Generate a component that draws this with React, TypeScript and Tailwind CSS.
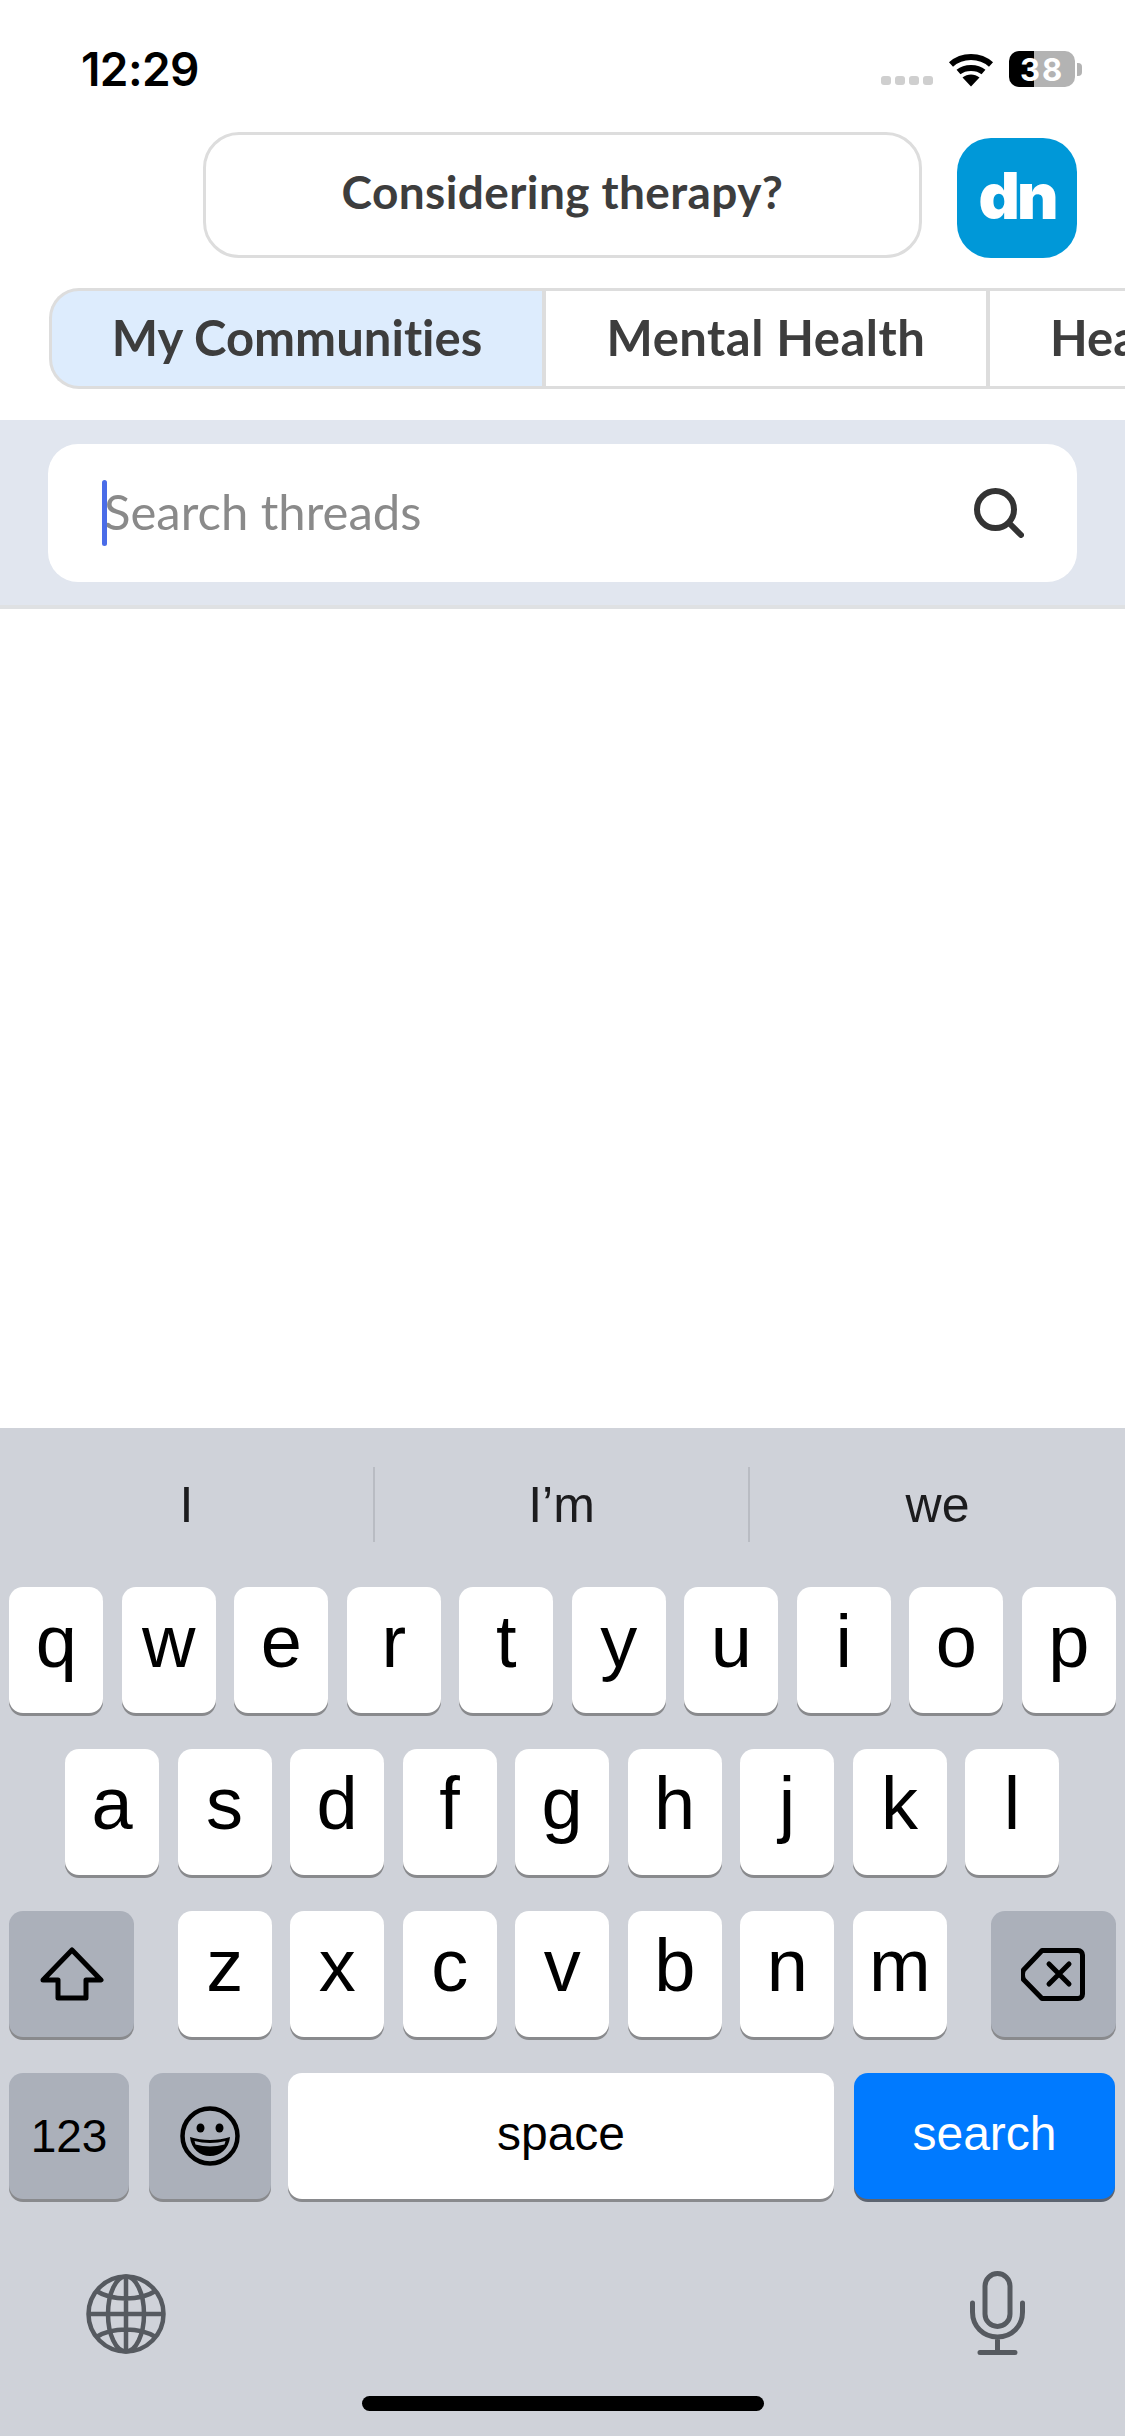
const FONT = "font-['Lato','Noto_Sans',sans-serif] [font-variant-ligatures:none]";

function Key({ label, className = "" }: { label: string; className?: string }) {
  return (
    <div className={`flex h-[126px] items-center justify-center rounded-[14px] bg-white pb-[16px] font-['Liberation_Sans',sans-serif] text-[74px] leading-none text-black shadow-[0_3px_0_#898a8d] ${className}`}>
      {label}
    </div>
  );
}

function GrayKey({ children, className = "" }: { children: React.ReactNode; className?: string }) {
  return (
    <div className={`flex h-[126px] items-center justify-center rounded-[14px] bg-[#abb0ba] shadow-[0_3px_0_#898a8d] ${className}`}>
      {children}
    </div>
  );
}

function Wifi() {
  return (
    <svg width="46" height="34" viewBox="0 0 46 34" className="mt-[1px]">
      <path d="M3 11.5C14 1.5 32 1.5 43 11.5" fill="none" stroke="#000" strokeWidth="6" />
      <path d="M10.5 19C17 13.5 29 13.5 35.5 19" fill="none" stroke="#000" strokeWidth="6" />
      <path d="M14.5 24.5C19.5 20.5 26.5 20.5 31.5 24.5L23 33.5Z" fill="#000" />
    </svg>
  );
}

function StatusBar() {
  return (
    <div className="flex h-[132px] shrink-0 items-start justify-between pl-[81px] pr-[43px] pt-[46px]">
      <div className="font-['Inter',sans-serif] text-[46px] font-semibold leading-[46px] tracking-[-0.6px] text-black">12:29</div>
      <div className="mt-[5px] flex items-end">
        <div className="mb-[2px] flex gap-[4px]">
          <div className="h-[9px] w-[10px] rounded-[3px] bg-[#cfcfcf]" />
          <div className="h-[9px] w-[10px] rounded-[3px] bg-[#cfcfcf]" />
          <div className="h-[9px] w-[10px] rounded-[3px] bg-[#cfcfcf]" />
          <div className="h-[9px] w-[10px] rounded-[3px] bg-[#cfcfcf]" />
        </div>
        <div className="ml-[15px]"><Wifi /></div>
        <div className="relative ml-[15px] flex h-[36px] w-[66px] overflow-hidden rounded-[10px]">
          <div className="w-[25px] bg-black" />
          <div className="flex-1 bg-[#b3b3b3]" />
          <div className="absolute inset-0 flex items-center justify-center font-['Inter',sans-serif] text-[31px] font-bold leading-none tracking-[2px] text-white">38</div>
        </div>
        <div className="mb-[11px] ml-[2px] h-[13px] w-[5px] rounded-r-[4px] bg-[#b3b3b3]" />
      </div>
    </div>
  );
}

function Header() {
  return (
    <div className="flex h-[126px] shrink-0 items-end justify-end pr-[48px]">
      <div className={`mr-[35px] flex h-[126px] w-[719px] items-center justify-center rounded-[36px] border-[3px] border-[#dddddd] bg-white pb-[6px] ${FONT} text-[46px] font-bold leading-none tracking-[0.4px] text-[#3d3d3d]`}>
        Considering therapy?
      </div>
      <div className="flex h-[120px] w-[120px] items-center justify-center rounded-[34px] bg-[#0098d8] pb-[4px] font-['Inter',sans-serif] text-[64px] font-black leading-none tracking-[-3px] text-white">
        dn
      </div>
    </div>
  );
}

function Tabs() {
  return (
    <div className={`mt-[30px] flex h-[101px] shrink-0 overflow-hidden pl-[49px] ${FONT} text-[49px] font-bold leading-none text-[#3d3d3d]`}>
      <div className="flex w-[493px] shrink-0 items-center justify-center rounded-l-[30px] border-[3px] border-r-0 border-[#dddddd] bg-[#ddecfd] pb-[2px]">My Communities</div>
      <div className="flex w-[444px] shrink-0 items-center justify-center border-[3px] border-l-[4px] border-r-0 border-[#dddddd] bg-white pb-[2px] tracking-[0.5px]">Mental Health</div>
      <div className="flex w-[400px] shrink-0 items-center justify-start border-[3px] border-l-[4px] border-r-0 border-[#dddddd] bg-white pb-[2px] pl-[60px]">Health</div>
    </div>
  );
}

function SearchBand() {
  return (
    <div className="mt-[31px] h-[189px] shrink-0 border-b-[4px] border-[#dfe1e3] bg-[#e1e6ef] px-[48px] pt-[24px]">
      <div className={`relative flex h-[138px] items-center justify-between rounded-[30px] bg-white pl-[56px] pr-[53px] ${FONT} text-[49px] leading-none text-[#8a8a8a]`}>
        <div className="absolute left-[54px] top-[36px] h-[66px] w-[5px] rounded-[3px] bg-[#4a6ce8]" />
        <span className="pb-[3px]">Search threads</span>
        <svg width="50" height="50" viewBox="0 0 50 50" fill="none" stroke="#333333" strokeWidth="6" strokeLinecap="round">
          <circle cx="21.5" cy="21.5" r="18.5" />
          <path d="M35 35L47 47" />
        </svg>
      </div>
    </div>
  );
}

function Suggestions() {
  return (
    <div className="flex h-[159px] items-start pt-[39px] font-['Liberation_Sans',sans-serif] text-[50px] leading-none text-[#1c1c1e]">
      <div className="flex h-[75px] w-[375px] items-center justify-center border-r-2 border-[#b9bcc3]">I</div>
      <div className="flex h-[75px] w-[375px] items-center justify-center border-r-2 border-[#b9bcc3]">I’m</div>
      <div className="flex h-[75px] flex-1 items-center justify-center">we</div>
    </div>
  );
}

function Keyboard() {
  return (
    <div className="flex h-[1008px] shrink-0 flex-col bg-[#cfd2d9]">
      <Suggestions />
      <div className="flex justify-center gap-[18.5px]">
        {["q", "w", "e", "r", "t", "y", "u", "i", "o", "p"].map((k) => (
          <Key key={k} label={k} className="w-[94px]" />
        ))}
      </div>
      <div className="mt-[36px] flex justify-center gap-[18.5px] pr-[1px]">
        {["a", "s", "d", "f", "g", "h", "j", "k", "l"].map((k) => (
          <Key key={k} label={k} className="w-[94px]" />
        ))}
      </div>
      <div className="mt-[36px] flex justify-between pl-[9px] pr-[9.5px]">
        <GrayKey className="w-[125px]">
          <svg width="64" height="54" viewBox="0 0 64 54" fill="none" stroke="#000" strokeWidth="5" strokeLinejoin="round">
            <path d="M32 3L61 33H46V51H18V33H3Z" />
          </svg>
        </GrayKey>
        <div className="flex gap-[18.5px]">
          {["z", "x", "c", "v", "b", "n", "m"].map((k) => (
            <Key key={k} label={k} className="w-[94px]" />
          ))}
        </div>
        <GrayKey className="w-[125px]">
          <svg width="64" height="53" viewBox="0 0 64 53" fill="none" stroke="#000" strokeWidth="5" strokeLinejoin="round" strokeLinecap="round">
            <path d="M21 2.5H57A4.5 4.5 0 0 1 61.5 7V46A4.5 4.5 0 0 1 57 50.5H21L2.5 31.5Q0.5 26.5 2.5 22Z" />
            <path d="M28 16L48 36M48 16L28 36" />
          </svg>
        </GrayKey>
      </div>
      <div className="mt-[36px] flex pl-[9px]">
        <GrayKey className="w-[120px] font-['Liberation_Sans',sans-serif] text-[46px] leading-none text-black">123</GrayKey>
        <GrayKey className="ml-[20px] w-[122px]">
          <svg width="60" height="60" viewBox="0 0 60 60">
            <circle cx="30" cy="30" r="27.5" fill="none" stroke="#000" strokeWidth="4.5" />
            <ellipse cx="20.5" cy="22" rx="4" ry="4.5" fill="#000" />
            <ellipse cx="39.5" cy="22" rx="4" ry="4.5" fill="#000" />
            <path d="M10 31C22 35 38 35 50 31C49 43 40 50 30 50C20 50 11 43 10 31Z" fill="#000" />
            <path d="M14.5 35C24 37.5 36 37.5 45.5 35L44.5 38.5C35 41 25 41 15.5 38.5Z" fill="#abb0ba" />
          </svg>
        </GrayKey>
        <div className="ml-[17px] flex h-[126px] w-[546px] items-center justify-center rounded-[14px] bg-white pb-[4px] font-['Liberation_Sans',sans-serif] text-[48px] leading-none text-black shadow-[0_3px_0_#898a8d]">space</div>
        <div className="ml-[20px] flex h-[126px] w-[261px] items-center justify-center rounded-[14px] bg-[#007aff] pb-[4px] font-['Liberation_Sans',sans-serif] text-[48px] leading-none text-white shadow-[0_3px_0_#5d6470]">search</div>
      </div>
      <div className="mt-[72px] flex items-start justify-between pl-[86px] pr-[100px]">
        <svg width="80" height="80" viewBox="0 0 80 80" fill="none" stroke="#565a60" strokeWidth="4.5" className="mt-[3px]">
          <circle cx="40" cy="40" r="37.5" />
          <ellipse cx="40" cy="40" rx="18" ry="37.5" />
          <path d="M40 2.5V77.5M2.5 40H77.5M10.5 17C26 27 54 27 69.5 17M10.5 63C26 53 54 53 69.5 63" />
        </svg>
        <svg width="55" height="84" viewBox="0 0 55 84" fill="none" stroke="#565a60" strokeWidth="5" strokeLinecap="round">
          <rect x="15" y="2.5" width="25" height="53" rx="12.5" />
          <path d="M2.5 32V41C2.5 55 13 66 27.5 66C42 66 52.5 55 52.5 41V32M27.5 66V81M10 81.5H45" />
        </svg>
      </div>
      <div className="mx-auto mt-[41px] h-[15px] w-[402px] rounded-full bg-black" />
    </div>
  );
}

export default function App() {
  return (
    <div className="flex h-[2436px] w-[1125px] flex-col overflow-hidden bg-white">
      <StatusBar />
      <Header />
      <Tabs />
      <SearchBand />
      <div className="flex-1" />
      <Keyboard />
    </div>
  );
}
